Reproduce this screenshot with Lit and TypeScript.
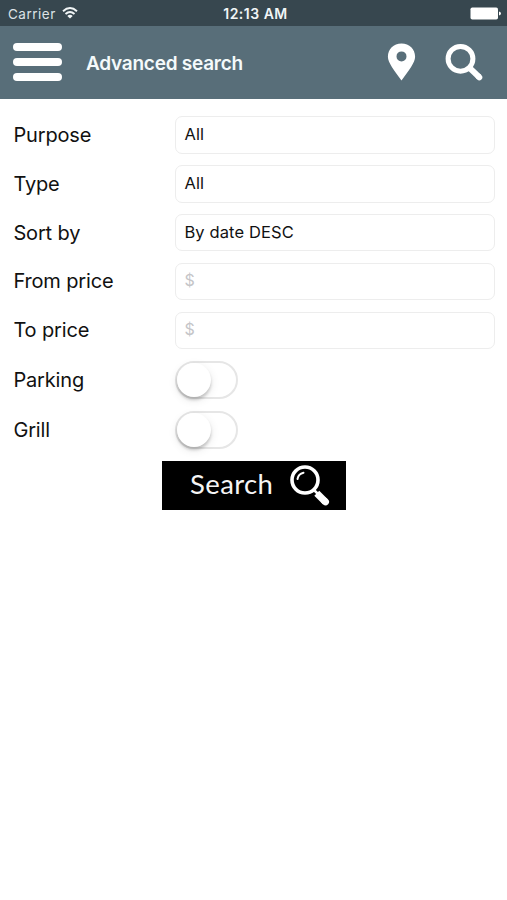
import { LitElement, html, css } from "lit";
import { customElement, property } from "lit/decorators.js";

@customElement("status-bar")
class StatusBar extends LitElement {
  static styles = css`
    :host { display: grid; grid-template-columns: 1fr auto 1fr; align-items: center; height: 25.5px; box-sizing: border-box;
      padding: 2px 6px 0 8px; background: #37474f; color: #dce3e6; font-size: 13.5px; line-height: 20px; }
    .carrier { display: flex; align-items: center; gap: 6px; letter-spacing: 0.5px; }
    .wifi { margin-top: -1px; }
    .time { padding-left: 2px; font-weight: 600; font-size: 14px; letter-spacing: 0.5px; color: #f1f5f6; }
    .battery { justify-self: end; }
    svg { display: block; }
  `;
  render() {
    return html`
      <div class="carrier"><span>Carrier</span>
        <svg class="wifi" width="16" height="12" viewBox="0 0 16 12" fill="none" stroke="#f1f6f7" stroke-width="1.9">
          <path d="M1 4.2Q8-2 15 4.2M3.5 7Q8 3 12.5 7"/>
          <path d="M8 11.4 5.3 8.9Q8 6.6 10.7 8.9Z" fill="#f1f6f7" stroke="none"/>
        </svg>
      </div>
      <div class="time">12:13 AM</div>
      <svg class="battery" width="31" height="13" viewBox="0 0 31 13" fill="#fff">
        <rect x="0.5" y="0.5" width="27.5" height="12" rx="1.8"/>
        <path d="M29 4.5q2 .4 2 2t-2 2z"/>
      </svg>`;
  }
}

@customElement("nav-bar")
class NavBar extends LitElement {
  static styles = css`
    :host { display: flex; align-items: center; height: 73px; box-sizing: border-box; padding: 0 23px 0 13px; background: #586e79; color: #f4fafb; }
    .menu { display: grid; gap: 7px; width: 49px; }
    .bar { height: 8px; border-radius: 4px; background: #fff; }
    .title { flex: 1; margin-left: 24px; font: 600 19px/26px "Inter", sans-serif; letter-spacing: -0.25px; padding-top: 3px; }
    .pin { margin-right: 29px; }
    svg { display: block; }
  `;
  render() {
    return html`
      <div class="menu"><div class="bar"></div><div class="bar"></div><div class="bar"></div></div>
      <div class="title">Advanced search</div>
      <svg class="pin" width="29" height="38" viewBox="0 0 29 38">
        <path fill="#fff" fill-rule="evenodd" d="M14.5.5C6.5.5.9 6.300.9 13.700.9 19.500 7 27 14.500 37.500 22 27 28.100 19.500 28.100 13.700 28.100 6.300 22.500.5 14.500.5ZM14.500 8.400a5 5 0 1 1 0 10 5 5 0 0 1 0-10Z"/>
      </svg>
      <svg width="39" height="39" viewBox="0 0 39 39" fill="none" stroke="#fff">
        <circle cx="15.500" cy="15.800" r="12.400" stroke-width="5"/>
        <path d="M24 24.300 34.200 34.200" stroke-width="6"/>
        <path d="M33.600 33.700 34.300 34.400" stroke-width="6" stroke-linecap="round"/>
      </svg>`;
  }
}

@customElement("toggle-switch")
class ToggleSwitch extends LitElement {
  static styles = css`
    :host { display: flex; box-sizing: border-box; width: 63px; height: 38px; border: 2px solid #e6e6e6; border-radius: 19px; background: #fff; }
    .knob { width: 34px; height: 34px; border-radius: 50%; background: #fff; box-shadow: 0 3px 3px rgba(0, 0, 0, 0.18), 0 3px 10px rgba(0, 0, 0, 0.1); }
  `;
  render() { return html`<div class="knob"></div>`; }
}

@customElement("form-row")
class FormRow extends LitElement {
  @property() label = "";
  @property() value = "";
  @property() hint = "";
  @property({ type: Boolean }) toggle = false;
  static styles = css`
    :host { display: grid; grid-template-columns: 162px 1fr; align-items: center; height: 48.85px; }
    :host([toggle]) { height: 50px; }
    .label { font-size: 20px; line-height: 26px; letter-spacing: -0.15px; color: #111; }
    .field { display: flex; align-items: center; box-sizing: border-box; height: 37.5px; padding: 0 8px 2px; border: 1.5px solid #ededed;
      border-radius: 7px; background: #fff; font-size: 16.5px; letter-spacing: 0.12px; color: #111; }
    .hint { font-size: 16px; color: #c5c5c8; }
  `;
  render() {
    return html`<div class="label">${this.label}</div>
      ${this.toggle
        ? html`<toggle-switch></toggle-switch>`
        : html`<div class="field">${this.value || html`<span class="hint">${this.hint}</span>`}</div>`}`;
  }
}

@customElement("app-root")
class AppRoot extends LitElement {
  static styles = css`
    :host { display: flex; flex-direction: column; height: 900px; background: #fff; font-family: "Inter", "Liberation Sans", sans-serif; }
    .form { padding: 12px 12px 0 13.4px; }
    .switches { padding-top: 0.6px; }
    .search { display: flex; align-items: center; box-sizing: border-box; width: 184px; height: 49px; margin: 6px 0 0 162px; padding-left: 28px;
      background: #000; color: #f5f5f5; font: 400 27.5px/40px "Lato", sans-serif; }
    .word { width: 100px; margin-top: -3px; letter-spacing: 0.4px; white-space: nowrap; }
    svg { display: block; }
  `;
  render() {
    return html`
      <status-bar></status-bar>
      <nav-bar></nav-bar>
      <div class="form">
        <form-row label="Purpose" value="All"></form-row>
        <form-row label="Type" value="All"></form-row>
        <form-row label="Sort by" value="By date DESC"></form-row>
        <form-row label="From price" hint="$"></form-row>
        <form-row label="To price" hint="$"></form-row>
        <div class="switches">
          <form-row label="Parking" toggle></form-row>
          <form-row label="Grill" toggle></form-row>
        </div>
      </div>
      <div class="search"><span class="word">Search</span>
        <svg width="40" height="42" viewBox="0 0 40 42" fill="none" stroke="#fff">
          <circle cx="15" cy="15" r="13" stroke-width="3.600"/>
          <path d="M7.500 14Q8.300 9 13.500 7.800" stroke-width="2" stroke-linecap="round"/>
          <path d="M24 25 27.500 28.500" stroke-width="2.500"/>
          <path d="M26.800 28.300 35.300 36.700" stroke-width="7"/>
          <path d="M34.500 36 35.500 36.900" stroke-width="7" stroke-linecap="round"/>
        </svg>
      </div>`;
  }
}
